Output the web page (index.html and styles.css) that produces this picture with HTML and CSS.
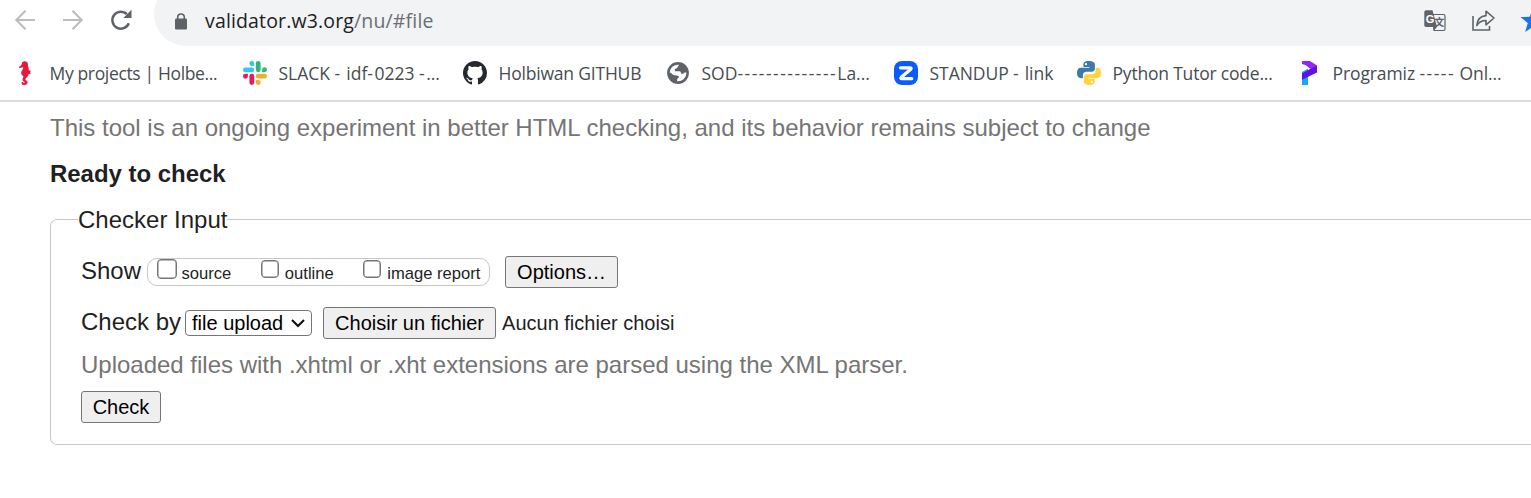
FILE: index.html
```html
<!DOCTYPE html>
<html lang="en">
<head>
<meta charset="utf-8">
<title>Nu Html Checker</title>
<link rel="stylesheet" href="styles.css">
</head>
<body>
<header class="browser">
  <div class="toolbar">
    <nav class="nav">
      <svg width="22" height="22" viewBox="0 0 22 22" fill="none" stroke="#babcbe" stroke-width="2"><path d="M21 11H3M11.500 1.800L2.300 11l9.200 9.200"/></svg>
      <svg width="22" height="22" viewBox="0 0 22 22" fill="none" stroke="#babcbe" stroke-width="2"><path d="M1 11h18M10.500 1.800l9.200 9.200-9.200 9.200"/></svg>
      <svg width="22" height="22" viewBox="0 0 22 22" fill="none" stroke="#5f6368" stroke-width="2.500"><path d="M18.800 14.300A8.500 8.500 0 1 1 16.800 5"/><path d="M21.500 .8v8.200h-8.200z" fill="#5f6368" stroke="none"/></svg>
    </nav>
    <div class="omnibox">
      <svg class="lock" width="12" height="17" viewBox="0 0 12 17"><path d="M2.700 7V4.300a3.300 3.300 0 0 1 6.600 0V7" fill="none" stroke="#5f6368" stroke-width="1.600"/><rect y="5.500" width="12" height="11" rx="1.300" fill="#5f6368"/></svg>
      <span class="url">validator.w3.org<span class="path">/nu/#file</span></span>
      <div class="actions">
        <svg width="22" height="22" viewBox="0 0 22 22"><path d="M8.500 4.500H19.500a1.500 1.500 0 0 1 1.500 1.500v13a1.500 1.500 0 0 1-1.500 1.500H10z" fill="#f1f3f4" stroke="#5f6368" stroke-width="1.200"/><path d="M1.800 .3H8.500L13 17H2A1.700 1.700 0 0 1 .3 15.300V2A1.700 1.700 0 0 1 2 .3zM9 17h4l-3 3.500z" fill="#5f6368"/><text x="1.700" y="13" class="g-letter">G</text><text x="10.300" y="16" class="han-letter">文</text></svg>
        <svg width="23" height="21" viewBox="0 0 23 21" fill="none" stroke="#5f6368" stroke-width="1.600"><path d="M1 6v14h16.500v-4"/><path d="M4.800 15.500C5.400 9.500 8.600 6 14 5.600V1.200L22 8l-8 6.800v-4.300c-4.200 0-7 1.500-9.200 5z" stroke-linejoin="round"/></svg>
        <svg class="star" width="26" height="24" viewBox="0 0 26 24"><path fill="#1a73e8" d="M13 0l3.200 8.800 9.300.3-7.300 5.800 2.600 9L13 18.700 5.200 24l2.600-9.100L.5 9.100l9.300-.3z"/></svg>
      </div>
    </div>
  </div>
  <div class="bookmarks">
    <div class="bookmark b1"><svg width="24" height="24" viewBox="0 0 24 24"><path fill="#e51b3e" d="M9.200 1.200Q11-.3 13 .5q2 .7 2 3-.2 1.300.4 2.700.6 1.600.4 3l2.200.6-.9 1.500.7 1.400-2.200.5q-.2 1.800-1.800 3.100-1.500 1.300-1.400 2.700 1.800.5 2.300 2-.1 2.900-3.500 3.100-2.500 0-2.800-1.900.2-1.300 1.600-1.100.3 1.300 1.600.8.5-1-1-1.500-1.800-1-.9-3 .8-1.300.7-2.200-2.400-1.300-2.300-3.500.2-2 1.700-3.500.6-1 .2-1.800-1.500-.2-2.400.7l-1.400-.1-.1-1.300Q8.500 4.500 8.800 3z"/></svg><span>My projects | Holbe...</span></div>
    <div class="bookmark b2"><svg width="24" height="24" viewBox="0 0 24 24"><g fill="#36c5f0"><path d="M8.800 0a2.400 2.400 0 1 0 0 4.900h2.400V2.400A2.400 2.400 0 0 0 8.800 0z"/><rect y="6.500" width="11.200" height="4.800" rx="2.400"/></g><g fill="#2eb67d"><rect x="12.800" width="4.800" height="11.200" rx="2.400"/><path d="M24 8.800a2.400 2.400 0 1 0-4.900 0v2.400h2.500A2.400 2.400 0 0 0 24 8.800z"/></g><g fill="#ecb22e"><rect x="12.800" y="12.800" width="11.200" height="4.800" rx="2.400"/><path d="M15.200 24a2.400 2.400 0 1 0 0-4.900h-2.400v2.500a2.400 2.400 0 0 0 2.400 2.400z"/></g><g fill="#e01e5a"><rect x="6.400" y="12.800" width="4.800" height="11.200" rx="2.400"/><path d="M0 15.200a2.400 2.400 0 1 0 4.900 0v-2.400H2.400A2.400 2.400 0 0 0 0 15.200z"/></g></svg><span>SLACK <i>-</i> idf<i>-</i>0223 <i>-</i>...</span></div>
    <div class="bookmark b3"><svg width="24" height="24" viewBox="0 0 16 16"><path fill="#24292f" d="M8 0C3.580 0 0 3.580 0 8c0 3.540 2.290 6.530 5.470 7.590.4.070.55-.17.55-.38 0-.19-.01-.82-.01-1.490-2.010.37-2.530-.49-2.690-.94-.09-.23-.48-.94-.82-1.130-.28-.15-.68-.52-.01-.53.63-.01 1.080.58 1.230.82.72 1.210 1.870.87 2.330.66.07-.52.28-.87.51-1.070-1.780-.2-3.640-.89-3.640-3.950 0-.87.31-1.590.82-2.150-.08-.2-.36-1.020.08-2.120 0 0 .67-.21 2.200.82.64-.18 1.320-.27 2-.27s1.360.09 2 .27c1.530-1.040 2.200-.82 2.200-.82.44 1.100.16 1.920.08 2.120.51.56.82 1.270.82 2.150 0 3.070-1.870 3.750-3.650 3.950.29.25.54.73.54 1.480 0 1.070-.01 1.930-.01 2.200 0 .21.15.46.55.38A8 8 0 0 0 16 8c0-4.420-3.580-8-8-8z"/></svg><span>Holbiwan GITHUB</span></div>
    <div class="bookmark b4"><svg width="24" height="24" viewBox="0 0 24 24"><circle cx="12" cy="12" r="10.900" fill="#5f6368"/><path fill="#fff" d="M13 3.700l-1.500 2.600c-.5 1.200-1.500 1.400-2.600 1.400v2.500h4.600c1.300.2 1.600 1.300 1.500 2.500h1.700c1.200 0 1.200-1.200 2.200-1.300h1.500a8.500 8.500 0 0 1-9.300 8.900v-2.200l2-1.800c-.2-1-1-1.700-2.500-1.800l-2.300-.2c-1.700-.6-2.600-2.200-4.600-2.800A8.300 8.300 0 0 1 13 3.700z"/></svg><span>SOD<i>--------------</i>La...</span></div>
    <div class="bookmark b5"><svg width="24" height="24" viewBox="0 0 24 24"><rect width="24" height="24" rx="8" fill="#0b5cff"/><path d="M6.500 6.800H16Q18 6.800 16.500 8.500L7.500 16q-1.500 1.700.5 1.700h9.700" fill="none" stroke="#fff" stroke-width="3.300" stroke-linecap="round" stroke-linejoin="round"/></svg><span>STANDUP <i>-</i> link</span></div>
    <div class="bookmark b6"><svg width="24" height="24" viewBox="0 0 24 24"><path fill="#3d7aaa" d="M11.800 0C7 0 6.400 2 6.400 3.500V6h6v.8H3.800C1.400 6.800 0 8.700 0 12s1.500 5.200 3.700 5.200h2.200v-3c0-2 1.500-3.500 3.500-3.500h5.500c1.700 0 3-1.400 3-3V3.500C17.900 1.200 15.500 0 11.800 0z"/><circle cx="9" cy="3.200" r="1.100" fill="#fff"/><path fill="#ffd43b" d="M12.200 24c4.800 0 5.400-2 5.400-3.500V18h-6v-.8h8.600c2.400 0 3.800-1.900 3.800-5.200s-1.500-5.200-3.700-5.200h-1.600v3c0 2-1.500 3.500-3.500 3.500H9.700c-1.700 0-3 1.400-3 3v4.200C6.700 22.800 8.500 24 12.200 24z"/><circle cx="14.800" cy="20.900" r="1.100" fill="#fff"/></svg><span>Python Tutor code...</span></div>
    <div class="bookmark b7"><svg width="24" height="24" viewBox="0 0 24 24"><path fill="#13a8fb" d="M5 10l6-3v17H5z"/><path fill="#fff" d="M4.800 2.500L13 6.500 5 11z"/><path fill="#9127f5" d="M4.800 0H13L20 4.500v6L12 7z"/><path fill="#9127f5" d="M4.800 0L13 5.500 5 3z"/><path fill="#6110e8" d="M20 5v6.500L5 18.800v-6.200L13 8z"/></svg><span>Programiz <i>-----</i> Onl...</span></div>
  </div>
</header>
<main class="page">
  <p class="hint intro">This tool is an ongoing experiment in better HTML checking, and its behavior remains subject to change</p>
  <h2>Ready to check</h2>
  <fieldset>
    <legend>Checker Input</legend>
    <div class="row show">
      <span class="lead">Show</span>
      <div class="options">
        <label><input class="large" type="checkbox"><span>source</span></label>
        <label><input type="checkbox"><span>outline</span></label>
        <label><input type="checkbox"><span>image report</span></label>
      </div>
      <button class="opt">Options…</button>
    </div>
    <div class="row by">
      <span class="lead">Check by</span>
      <div class="select"><span>file upload</span><svg width="14" height="9" viewBox="0 0 14 9"><path d="M1 1l6 6 6-6" fill="none" stroke="#111" stroke-width="2.200"/></svg></div>
      <button class="choose">Choisir un fichier</button>
      <span class="chosen">Aucun fichier choisi</span>
    </div>
    <p class="hint">Uploaded files with .xhtml or .xht extensions are parsed using the XML parser.</p>
    <button class="check">Check</button>
  </fieldset>
</main>
</body>
</html>
```
FILE: styles.css
```css
* { box-sizing: border-box; }
body { margin: 0; height: 498px; overflow: hidden; background: #fff; color: #1f1f24; font: 24px/28px "Liberation Sans", Arial, sans-serif; }
svg { display: block; flex: none; overflow: visible; }
i { font-style: normal; letter-spacing: 1.500px; }
p, h2 { margin: 0; }
.browser { height: 102px; border-bottom: 2px solid #dadbdd; font-family: "Open Sans", "Noto Sans", sans-serif; }
.toolbar { display: flex; height: 46px; overflow: hidden; }
.nav { display: flex; gap: 26px; width: 154px; padding: 9px 0 0 14px; }
.omnibox { display: flex; flex: 1; height: 64px; margin-top: -18px; padding: 31px 0 0 21px; background: #f1f3f4; border-radius: 32px 0 0 32px; }
.url { margin: -6px 0 0 18px; font-size: 19.500px; letter-spacing: .15px; color: #202124; white-space: nowrap; }
.path { color: #6b6f73; }
.actions { display: flex; gap: 26px; width: 107px; margin: -3px 0 0 auto; }
.star { margin: -2px 0 0 -1px; }
.g-letter { font: bold 11px "Liberation Sans", sans-serif; fill: #fff; }
.han-letter { font: bold 10px "Noto Sans CJK SC", sans-serif; fill: #5f6368; }
.bookmarks { display: flex; height: 54px; padding-left: 13px; font-size: 17.500px; color: #484c50; }
.bookmark { display: flex; gap: 11.500px; align-items: center; flex: none; white-space: nowrap; }
.bookmark span { margin-top: -1px; }
.b1 { width: 230px; gap: 12.500px; letter-spacing: -.35px; }
.b2 { width: 220px; }
.b3 { width: 203px; letter-spacing: -.2px; }
.b4 { width: 228px; }
.b5 { width: 183px; letter-spacing: -.05px; }
.b6 { width: 220px; letter-spacing: -.2px; }
.b7 { letter-spacing: -.1px; }
.page { padding: 12px 0 0 50px; }
.hint { color: #757575; }
.intro { white-space: nowrap; letter-spacing: -.005px; }
h2 { margin-top: 18px; font-size: 24px; line-height: 28px; letter-spacing: -.03px; }
fieldset { width: 1500px; height: 239px; margin: 18px 0 0; padding: 23px 0 0 30px; border: 1px solid #c8c8c8; border-radius: 7px; }
legend { margin-left: -3px; padding: 0; line-height: 27px; }
.row { display: flex; align-items: center; height: 32px; white-space: nowrap; }
.lead { margin-top: -2px; }
.show { margin-bottom: 19px; }
.options { display: flex; gap: 29.500px; width: 343px; height: 28px; margin-left: 6px; padding-left: 9px; border: 1px solid #c8c8c8; border-radius: 10px; font-size: 16.600px; }
label { display: flex; gap: 4.500px; height: 26px; }
label + label { gap: 6px; }
label span { padding-top: 1px; }
input { appearance: none; width: 18px; height: 18px; margin: 1px 0 0; border: 1.500px solid #767676; border-radius: 4px; background: #fff; box-shadow: inset 0 0 0 .5px #767676; }
.large { width: 20px; height: 20px; margin-top: 0; }
button { height: 32px; padding: 0; border: 1px solid #767676; border-radius: 3px; background: #efefef; color: #000; font: 20px/28px "Liberation Sans", Arial, sans-serif; }
.opt { width: 113px; margin-left: 15px; }
.select { display: flex; align-items: center; justify-content: space-between; width: 127px; height: 26px; margin-left: 4px; padding: 0 6px; border: 1px solid #767676; border-radius: 4px; color: #000; font-size: 20px; }
.choose { width: 173px; margin-left: 11px; }
.chosen { margin-left: 6px; font-size: 20px; }
fieldset .hint { margin-top: 12px; letter-spacing: -.008px; }
.check { display: block; width: 80px; margin-top: 12px; }
```
